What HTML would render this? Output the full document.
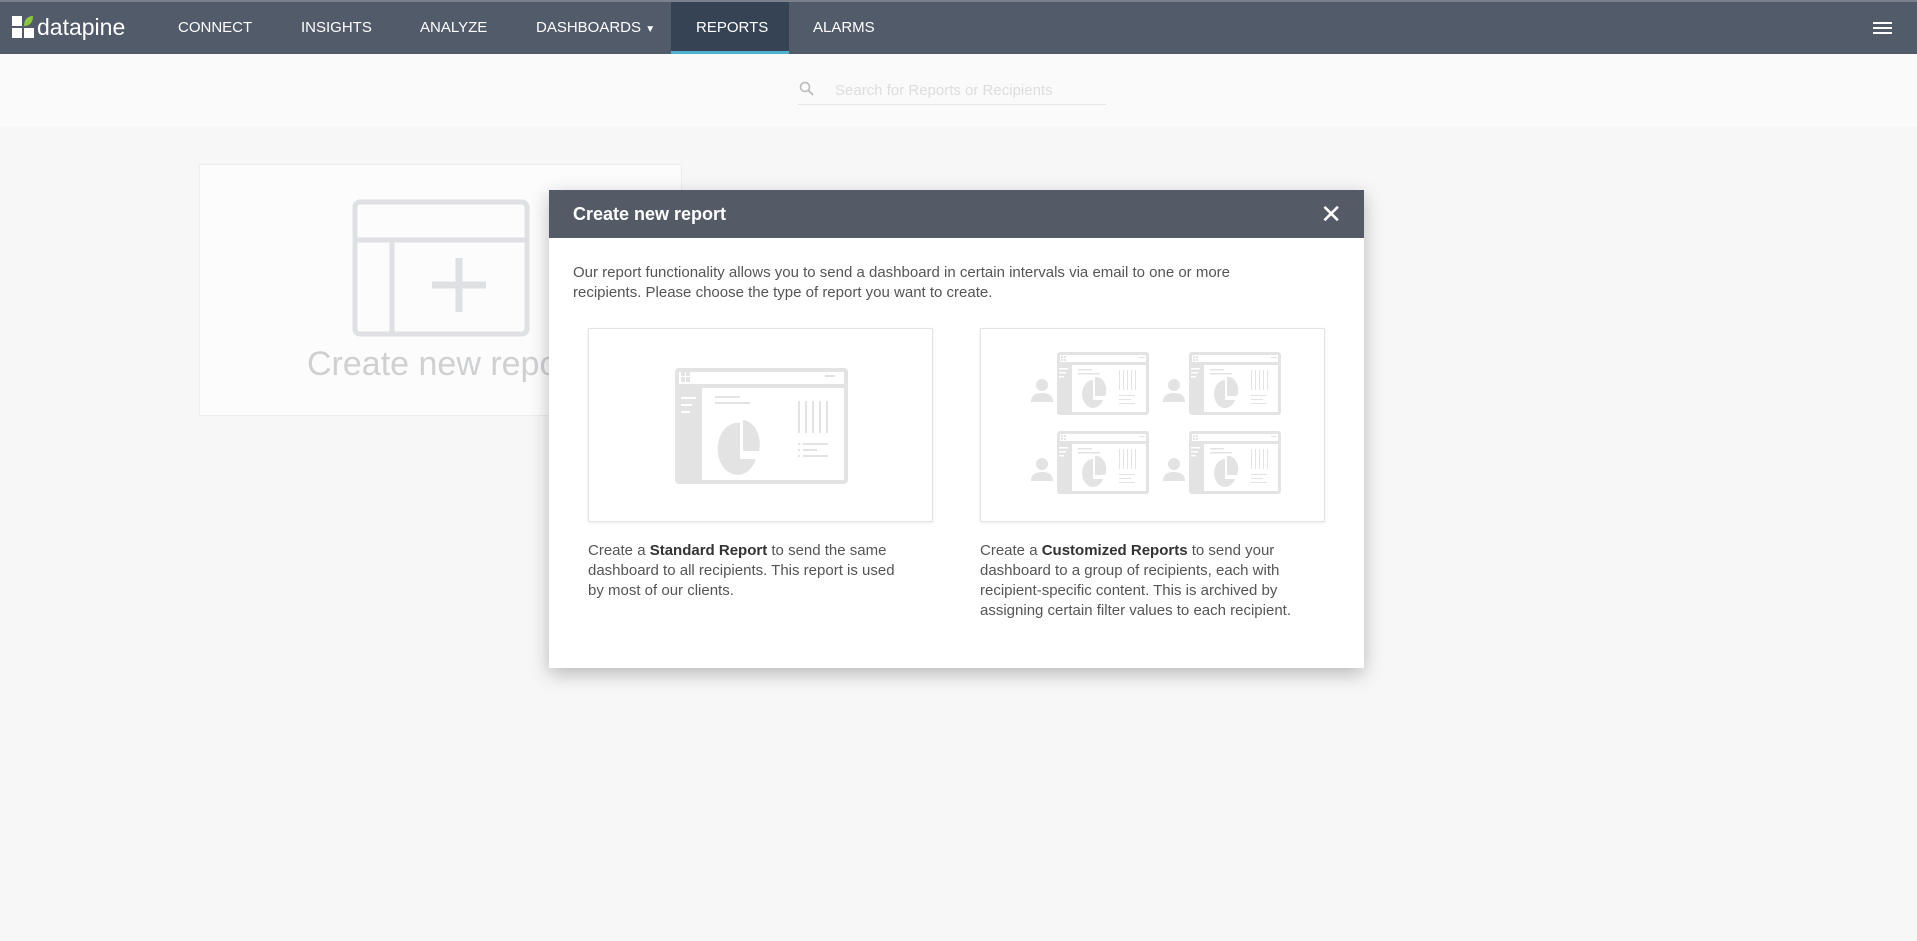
<!DOCTYPE html>
<html><head><meta charset="utf-8"><style>
*{margin:0;padding:0;box-sizing:border-box}
body{width:1917px;height:941px;overflow:hidden;background:#f7f7f7;font-family:"Liberation Sans",sans-serif;position:relative}
.nav{position:absolute;left:0;top:0;width:1917px;height:54px;background:#525b69;border-top:2px solid #7a818c}
.nav a{position:absolute;top:0;height:52px;line-height:52px;color:#fff;font-size:15px;text-decoration:none}
.rep{position:absolute;left:671px;top:0;width:118px;height:52px;background:#364354;border-bottom:3px solid #4fb3d0}
.search{position:absolute;left:0;top:54px;width:1917px;height:73px;background:#fafafa}
.abs{position:absolute}
.card{position:absolute;left:199px;top:164px;width:483px;height:252px;background:#fcfcfc;border:1px solid #eee}
.modal{position:absolute;left:549px;top:190px;width:815px;height:478px;background:#fff;box-shadow:0 6px 18px rgba(0,0,0,.25)}
.mh{height:48px;background:#545b66;color:#fff;font-weight:bold;font-size:18px;line-height:48px;padding-left:24px}
.p{position:absolute;color:#555;font-size:15px;line-height:20px}
.box{position:absolute;top:138px;width:345px;height:194px;border:1px solid #e4e4e4;box-shadow:0 1px 3px rgba(0,0,0,.08)}
b{color:#333}
</style></head><body>
<div class="nav">
 <svg class="abs" style="left:12px;top:14px" width="22" height="22" viewBox="0 0 22 22"><rect x="0" y="0" width="10" height="10" fill="#fff"/><path d="M12 10 C12 3 16 0 21 0 C21 6 18 10 12 10Z" fill="#8dc63f"/><rect x="0" y="12" width="10" height="10" fill="#fff"/><rect x="12" y="12" width="10" height="10" fill="#fff"/></svg>
 <a style="left:37px;font-size:23px;line-height:50px">datapine</a>
 <div class="rep"></div>
 <a style="left:178px">CONNECT</a>
 <a style="left:301px">INSIGHTS</a>
 <a style="left:420px">ANALYZE</a>
 <a style="left:536px">DASHBOARDS <span style="font-size:10px">▼</span></a>
 <a style="left:696px">REPORTS</a>
 <a style="left:813px">ALARMS</a>
 <div class="abs" style="left:1873px;top:20px;width:19px;height:2px;background:#fff;box-shadow:0 5px #fff,0 10px #fff"></div>
</div>
<div class="search">
 <svg class="abs" style="left:799px;top:27px" width="16" height="16" viewBox="0 0 16 16"><circle cx="6" cy="6" r="4.5" fill="none" stroke="#bbb" stroke-width="1.6"/><path d="M9.5 9.5 L14 14" stroke="#bbb" stroke-width="1.8"/></svg>
 <div class="abs" style="left:835px;top:28px;color:#ddd;font-size:15px">Search for Reports or Recipients</div>
 <div class="abs" style="left:798px;top:50px;width:308px;height:1px;background:#e6e6e6"></div>
</div>
<div class="card">
 <svg class="abs" style="left:150px;top:32px" width="182" height="142" viewBox="0 0 182 142"><rect x="5" y="5" width="172" height="132" rx="5" fill="none" stroke="#dfe0e3" stroke-width="5"/><path d="M5 43 H177 M42 43 V137" stroke="#dfe0e3" stroke-width="5"/><path d="M82 88 H136 M109 61 V115" stroke="#dfe0e3" stroke-width="7"/></svg>
 <div class="abs" style="left:107px;top:180px;font-size:34px;color:#cfd0d2;white-space:nowrap">Create new report</div>
</div>
<div class="modal">
 <div class="mh">Create new report<span style="position:absolute;right:22px;top:0;font-size:26px;font-weight:normal">✕</span></div>
 <div class="p" style="left:24px;top:73px;width:710px">Our report functionality allows you to send a dashboard in certain intervals via email to one or more recipients. Please choose the type of report you want to create.</div>
 <div class="box" style="left:39px">
  <svg class="abs" style="left:84px;top:37px" width="177" height="120" viewBox="0 0 177 120"><rect x="2" y="2" width="173" height="116" rx="4" fill="#e3e3e3"/><rect x="6" y="14" width="165" height="100" fill="#fff"/><rect x="2" y="2" width="173" height="20" rx="4" fill="#e3e3e3"/><rect x="6" y="6" width="165" height="12" fill="#fff"/><rect x="8" y="6" width="4" height="4" fill="#e3e3e3"/><rect x="13" y="6" width="4" height="4" fill="#e3e3e3"/><rect x="8" y="11" width="4" height="5" fill="#e3e3e3"/><rect x="13" y="11" width="4" height="5" fill="#e3e3e3"/><rect x="152" y="9" width="10" height="2" fill="#e3e3e3"/><rect x="6" y="22" width="23" height="94" fill="#e3e3e3"/><rect x="8" y="31" width="15" height="2" fill="#fff"/><rect x="8" y="38" width="11" height="2" fill="#fff"/><rect x="8" y="45" width="9" height="2" fill="#fff"/><rect x="42" y="30" width="25" height="2" fill="#e3e3e3"/><rect x="42" y="36" width="35" height="2" fill="#e3e3e3"/><path d="M67 57 A20 26 0 1 0 83 93 L67 93Z" fill="#e3e3e3"/><path d="M70 54 A18 24 0 0 1 86 85 L70 85Z" fill="#e3e3e3"/><g fill="#e3e3e3"><rect x="125" y="35" width="2" height="32"/><rect x="132" y="35" width="2" height="32"/><rect x="139" y="35" width="2" height="32"/><rect x="146" y="35" width="2" height="32"/><rect x="153" y="35" width="2" height="32"/><rect x="125" y="77" width="2" height="2"/><rect x="130" y="77" width="25" height="2"/><rect x="125" y="83" width="2" height="2"/><rect x="130" y="83" width="14" height="2"/><rect x="125" y="89" width="2" height="2"/><rect x="130" y="89" width="25" height="2"/></g></svg>
 </div>
 <div class="box" style="left:431px">
  <svg class="abs" style="left:48px;top:23px" width="256" height="150" viewBox="0 0 256 150">
   <defs><g id="m"><circle cx="13" cy="33" r="6" fill="#e3e3e3"/><path d="M2 50 Q2 41 13 41 Q24 41 24 50Z" fill="#e3e3e3"/><rect x="28" y="0" width="92" height="63" rx="3" fill="#e3e3e3"/><rect x="31" y="3" width="86" height="7" fill="#fff"/><rect x="32" y="4" width="2" height="2" fill="#e3e3e3"/><rect x="35" y="4" width="2" height="2" fill="#e3e3e3"/><rect x="32" y="7" width="2" height="2" fill="#e3e3e3"/><rect x="35" y="7" width="2" height="2" fill="#e3e3e3"/><rect x="110" y="5" width="6" height="1" fill="#e3e3e3"/><rect x="43" y="13" width="74" height="47" fill="#fff"/><rect x="30" y="16" width="9" height="1.5" fill="#fff"/><rect x="30" y="20" width="7" height="1.5" fill="#fff"/><rect x="30" y="24" width="5" height="1.5" fill="#fff"/><rect x="49" y="17" width="14" height="1.5" fill="#e3e3e3"/><rect x="49" y="21" width="22" height="1.5" fill="#e3e3e3"/><path d="M64 28 A11 14 0 1 0 74 48 L64 48Z" fill="#e3e3e3"/><path d="M66 25 A10 13 0 0 1 76 44 L66 44Z" fill="#e3e3e3"/><g fill="#e3e3e3"><rect x="90" y="18" width="1" height="20"/><rect x="94" y="18" width="1" height="20"/><rect x="98" y="18" width="1" height="20"/><rect x="102" y="18" width="1" height="20"/><rect x="106" y="18" width="1" height="20"/><rect x="90" y="43" width="16" height="1"/><rect x="90" y="47" width="12" height="1"/><rect x="90" y="51" width="16" height="1"/></g></g></defs>
   <use href="#m" x="0" y="0"/><use href="#m" x="132" y="0"/><use href="#m" x="0" y="79"/><use href="#m" x="132" y="79"/>
  </svg>
 </div>
 <div class="p" style="left:39px;top:351px;width:318px">Create a <b>Standard Report</b> to send the same dashboard to all recipients. This report is used by most of our clients.</div>
 <div class="p" style="left:431px;top:351px;width:360px">Create a <b>Customized Reports</b> to send your dashboard to a group of recipients, each with recipient-specific content. This is archived by assigning certain filter values to each recipient.</div>
</div>
</body></html>
